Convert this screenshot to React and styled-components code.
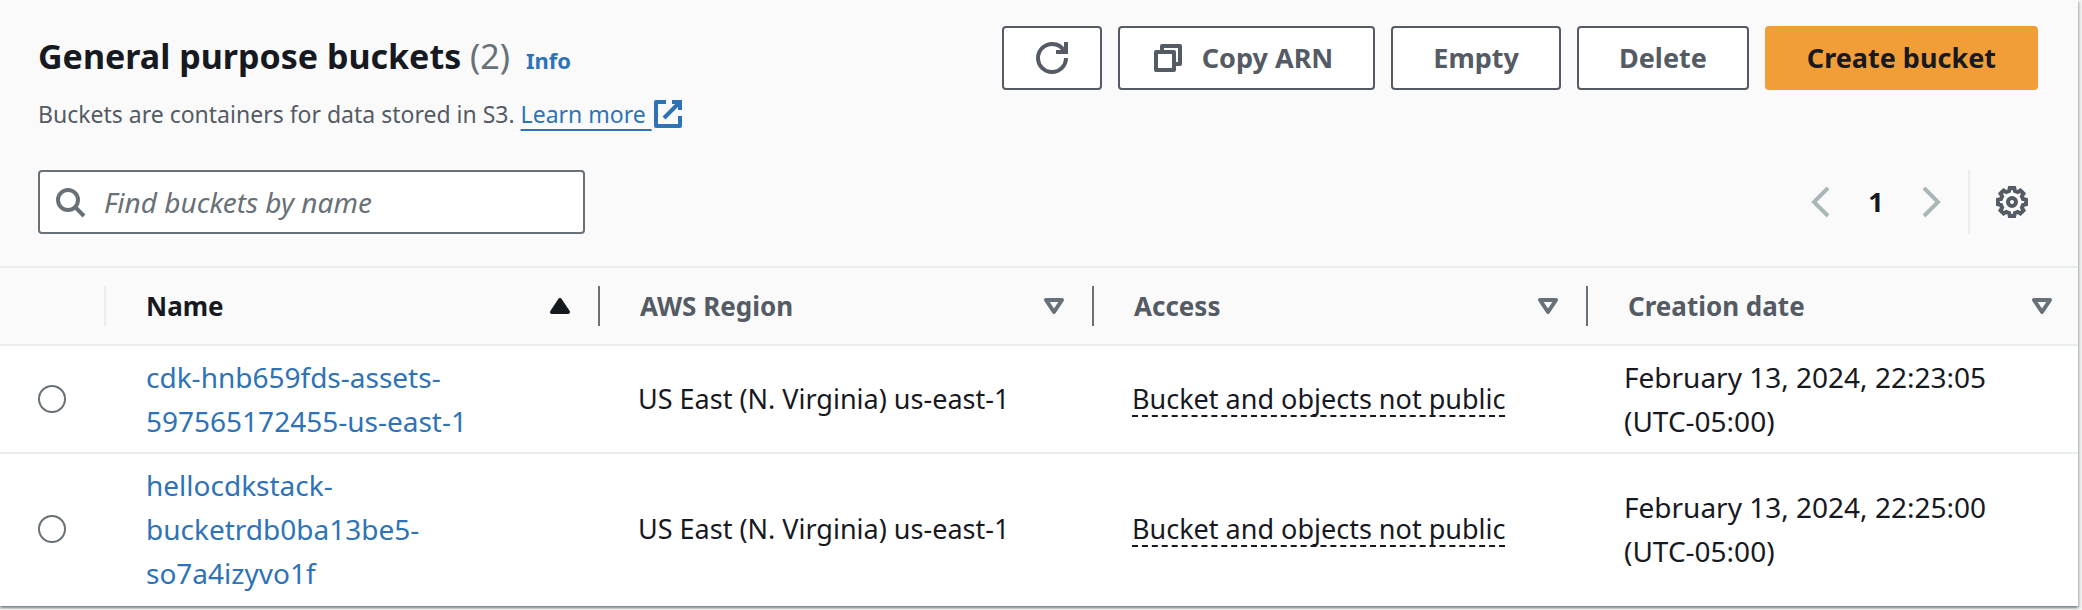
import React, { useState } from 'react';
import styled, { createGlobalStyle } from 'styled-components';

const color = {
  text: '#16191f',
  secondary: '#545b64',
  muted: '#687078',
  link: '#2e73b8',
  divider: '#eaeded',
  disabled: '#aab7b8',
  headerBg: '#fafafa',
  primary: '#f19e38',
};

const GlobalStyle = createGlobalStyle`
  *, *::before, *::after { box-sizing: border-box; }
  body {
    margin: 0;
    background: #f2f3f3;
    color: ${color.text};
    font-family: "Noto Sans", sans-serif;
    font-size: 27px;
    line-height: 44px;
  }
  button, input { font: inherit; color: inherit; }
`;

const Page = styled.main`
  padding: 0 4px 4px 0;
`;

const Card = styled.section`
  background: #fff;
  box-shadow:
    0 2px 2px 0 rgba(0, 28, 36, 0.3),
    2px 2px 2px 0 rgba(0, 28, 36, 0.15),
    -2px 2px 2px 0 rgba(0, 28, 36, 0.15);
`;

const CardHeader = styled.header`
  display: flex;
  flex-direction: column;
  gap: 36px;
  padding: 26px 40px 32px 38px;
  background: ${color.headerBg};
  border-bottom: 2px solid ${color.divider};
`;

const Bar = styled.div`
  display: flex;
  align-items: flex-start;
  justify-content: space-between;
  gap: 40px;
`;

const Heading = styled.div`
  display: flex;
  flex-direction: column;
  gap: 16px;
  padding-top: 8px;
`;

const TitleLine = styled.div`
  display: flex;
  align-items: baseline;
  gap: 16px;
  height: 44px;
`;

const Title = styled.h2`
  margin: 0;
  font-size: 34px;
  font-weight: 700;
  line-height: 44px;
`;

const Count = styled.span`
  font-weight: 400;
  color: ${color.muted};
`;

const InfoLink = styled.a`
  font-size: 22px;
  font-weight: 700;
  line-height: 40px;
  color: ${color.link};
  text-decoration: none;
`;

const Description = styled.p`
  display: flex;
  margin: 0;
  font-size: 23px;
  line-height: 40px;
  color: ${color.secondary};
  white-space: pre;
`;

const LearnMore = styled.a`
  display: inline-flex;
  align-items: center;
  color: ${color.link};
  text-decoration: none;
`;

const Underlined = styled.span`
  text-decoration: underline 2px;
  text-underline-offset: 6px;
  text-decoration-skip-ink: none;
`;

const Actions = styled.div`
  display: flex;
  gap: 16px;
`;

const Button = styled.button`
  display: inline-flex;
  align-items: center;
  justify-content: center;
  gap: 18px;
  height: 64px;
  padding: 0 ${(p) => (p.$iconOnly ? 32 : 40)}px 0 ${(p) => (p.$icon || p.$iconOnly ? 32 : 40)}px;
  border: 2px solid ${(p) => (p.$primary ? color.primary : color.secondary)};
  border-radius: 4px;
  background: ${(p) => (p.$primary ? color.primary : '#fff')};
  color: ${(p) => (p.$primary ? color.text : color.secondary)};
  font-weight: 700;
  white-space: nowrap;
  cursor: pointer;
`;

const SearchBox = styled.label`
  display: flex;
  align-items: center;
  gap: 18px;
  width: 547px;
  height: 64px;
  padding: 0 14px;
  border: 2px solid ${color.muted};
  border-radius: 4px;
  background: #fff;
  color: ${color.muted};
`;

const SearchInput = styled.input`
  flex: 1;
  min-width: 0;
  padding: 0;
  border: 0;
  outline: 0;
  background: transparent;
  font-size: 28px;
  color: ${color.text};
  &::placeholder {
    color: ${color.muted};
    font-style: italic;
    opacity: 1;
  }
`;

const Tools = styled.div`
  display: flex;
  align-items: center;
  height: 64px;
  padding-right: 10px;
`;

const Pagination = styled.nav`
  display: flex;
  align-items: center;
  padding-right: 22px;
`;

const PlainButton = styled.button`
  display: inline-flex;
  padding: 0;
  border: 0;
  background: none;
  color: ${(p) => (p.disabled ? color.disabled : color.secondary)};
  cursor: pointer;
`;

const PageButton = styled(PlainButton)`
  justify-content: center;
  width: 76px;
  font-weight: 700;
  color: ${color.text};
`;

const ToolDivider = styled.span`
  width: 2px;
  height: 64px;
  margin-right: 26px;
  background: ${color.divider};
`;

const Table = styled.table`
  width: 100%;
  table-layout: fixed;
  border-collapse: separate;
  border-spacing: 0;
`;

const Col = styled.col`
  width: ${(p) => (p.$width ? `${p.$width}px` : 'auto')};
`;

const HeadCell = styled.th`
  height: 78px;
  padding: 0;
  background: ${color.headerBg};
  border-bottom: 2px solid ${color.divider};
  text-align: left;
`;

const HeadInner = styled.div`
  height: 40px;
  padding: 0 ${(p) => (p.$last ? 20 : 22)}px 0 40px;
  border-right: ${(p) => (p.$last ? '0' : `2px solid ${p.$light ? color.divider : color.muted}`)};
`;

const SortButton = styled.button`
  display: flex;
  align-items: center;
  justify-content: space-between;
  width: 100%;
  height: 40px;
  padding: 0;
  border: 0;
  background: none;
  font-size: 26px;
  font-weight: 700;
  line-height: 40px;
  color: ${(p) => (p.$sorted ? color.text : color.secondary)};
  cursor: pointer;
  svg { color: ${(p) => (p.$sorted ? color.text : color.muted)}; }
`;

const Cell = styled.td`
  padding: 9px 40px 9px 38px;
  border-bottom: 2px solid ${color.divider};
  vertical-align: middle;
  tr:last-child > & { border-bottom-color: transparent; }
`;

const SelectCell = styled(Cell)`
  padding-right: 0;
`;

const NameCell = styled(Cell)`
  padding-left: 40px;
  font-size: 28px;
`;

const DateCell = styled(Cell)`
  padding-left: 36px;
  font-size: 28px;
`;

const Radio = styled.input`
  display: block;
  appearance: none;
  width: 28px;
  height: 28px;
  margin: 0;
  border: 2px solid ${color.muted};
  border-radius: 50%;
  background: #fff;
  &:checked { border: 8px solid ${color.link}; }
`;

const BucketLink = styled.a`
  color: ${color.link};
  text-decoration: none;
`;

const AccessButton = styled.button`
  padding: 0;
  border: 0;
  border-bottom: 2px dashed ${color.text};
  background: none;
  line-height: 32px;
  cursor: pointer;
`;

const Svg = styled.svg`
  display: block;
  flex: none;
  width: 32px;
  height: 32px;
  fill: none;
  stroke: currentColor;
  stroke-width: 2;
`;

const Icon = ({ children, ...rest }) => (
  <Svg viewBox="0 0 16 16" aria-hidden="true" {...rest}>{children}</Svg>
);

const gearPoints = Array.from({ length: 8 }, (_, i) => i * 45)
  .flatMap((a) => [[a - 9, 7.1], [a + 9, 7.1], [a + 15, 5.7], [a + 30, 5.7]])
  .map(([a, r]) => {
    const t = (a * Math.PI) / 180;
    return `${(8 + r * Math.sin(t)).toFixed(2)},${(8 - r * Math.cos(t)).toFixed(2)}`;
  })
  .join(' ');

const RefreshIcon = () => (
  <Icon>
    <path d="M10 5h5V0" />
    <path d="M15 8a7 7 0 0 1-14 0 7 7 0 0 1 7-7 6.9 6.9 0 0 1 6.3 4" />
  </Icon>
);
const CopyIcon = () => (
  <Icon strokeLinejoin="round">
    <path d="M2 5h9v9H2z" />
    <path d="M5 5V2h9v9h-3" />
  </Icon>
);
const ExternalIcon = () => (
  <Icon>
    <path d="M10 2h4v4M6 10l8-8" />
    <path d="M14 9v5H2V2h5" strokeLinejoin="round" />
  </Icon>
);
const SearchIcon = () => (
  <Icon>
    <circle cx="7" cy="7" r="5" />
    <path d="M15 15l-4.5-4.5" />
  </Icon>
);
const PrevIcon = () => <Icon><path d="M11 1L4 8l7 7" /></Icon>;
const NextIcon = () => <Icon><path d="M5 1l7 7-7 7" /></Icon>;
const GearIcon = () => (
  <Icon>
    <polygon points={gearPoints} />
    <circle cx="8" cy="8" r="2" />
  </Icon>
);
const SortIcon = ({ sorted }) => (
  <Icon strokeLinejoin="round">
    {sorted ? <path d="M4 11h8L8 5z" fill="currentColor" /> : <path d="M4 5h8l-4 6z" />}
  </Icon>
);

const columns = ['Name', 'AWS Region', 'Access', 'Creation date'];

const buckets = [
  {
    name: 'cdk-hnb659fds-assets-597565172455-us-east-1',
    region: 'US East (N. Virginia) us-east-1',
    access: 'Bucket and objects not public',
    created: 'February 13, 2024, 22:23:05 (UTC-05:00)',
  },
  {
    name: 'hellocdkstack-bucketrdb0ba13be5-so7a4izyvo1f',
    region: 'US East (N. Virginia) us-east-1',
    access: 'Bucket and objects not public',
    created: 'February 13, 2024, 22:25:00 (UTC-05:00)',
  },
];

export default function App() {
  const [selected, setSelected] = useState(null);
  const [query, setQuery] = useState('');

  return (
    <>
      <GlobalStyle />
      <Page>
        <Card>
          <CardHeader>
            <Bar>
              <Heading>
                <TitleLine>
                  <Title>General purpose buckets <Count>(2)</Count></Title>
                  <InfoLink href="#info">Info</InfoLink>
                </TitleLine>
                <Description>
                  {'Buckets are containers for data stored in S3. '}
                  <LearnMore href="#learn-more">
                    <Underlined>{'Learn more\u00a0'}</Underlined>
                    <ExternalIcon />
                  </LearnMore>
                </Description>
              </Heading>
              <Actions>
                <Button type="button" $iconOnly aria-label="Refresh"><RefreshIcon /></Button>
                <Button type="button" $icon><CopyIcon />Copy ARN</Button>
                <Button type="button">Empty</Button>
                <Button type="button">Delete</Button>
                <Button type="button" $primary>Create bucket</Button>
              </Actions>
            </Bar>
            <Bar>
              <SearchBox>
                <SearchIcon />
                <SearchInput
                  type="text"
                  aria-label="Find buckets by name"
                  placeholder="Find buckets by name"
                  value={query}
                  onChange={(e) => setQuery(e.target.value)}
                />
              </SearchBox>
              <Tools>
                <Pagination aria-label="Pagination">
                  <PlainButton type="button" disabled aria-label="Previous page"><PrevIcon /></PlainButton>
                  <PageButton type="button" aria-current="page">1</PageButton>
                  <PlainButton type="button" disabled aria-label="Next page"><NextIcon /></PlainButton>
                </Pagination>
                <ToolDivider />
                <PlainButton type="button" aria-label="Preferences"><GearIcon /></PlainButton>
              </Tools>
            </Bar>
          </CardHeader>
          <Table>
            <colgroup>
              <Col $width={106} />
              <Col $width={494} />
              <Col $width={494} />
              <Col $width={494} />
              <Col />
            </colgroup>
            <thead>
              <tr>
                <HeadCell scope="col" aria-label="Selection"><HeadInner $light /></HeadCell>
                {columns.map((label, i) => (
                  <HeadCell key={label} scope="col" aria-sort={i === 0 ? 'ascending' : 'none'}>
                    <HeadInner $last={i === columns.length - 1}>
                      <SortButton type="button" $sorted={i === 0}>
                        {label}
                        <SortIcon sorted={i === 0} />
                      </SortButton>
                    </HeadInner>
                  </HeadCell>
                ))}
              </tr>
            </thead>
            <tbody>
              {buckets.map((b) => (
                <tr key={b.name}>
                  <SelectCell>
                    <Radio
                      type="radio"
                      name="bucket"
                      aria-label={b.name}
                      checked={selected === b.name}
                      onChange={() => setSelected(b.name)}
                    />
                  </SelectCell>
                  <NameCell><BucketLink href={`#${b.name}`}>{b.name}</BucketLink></NameCell>
                  <Cell>{b.region}</Cell>
                  <Cell><AccessButton type="button">{b.access}</AccessButton></Cell>
                  <DateCell>{b.created}</DateCell>
                </tr>
              ))}
            </tbody>
          </Table>
        </Card>
      </Page>
    </>
  );
}
